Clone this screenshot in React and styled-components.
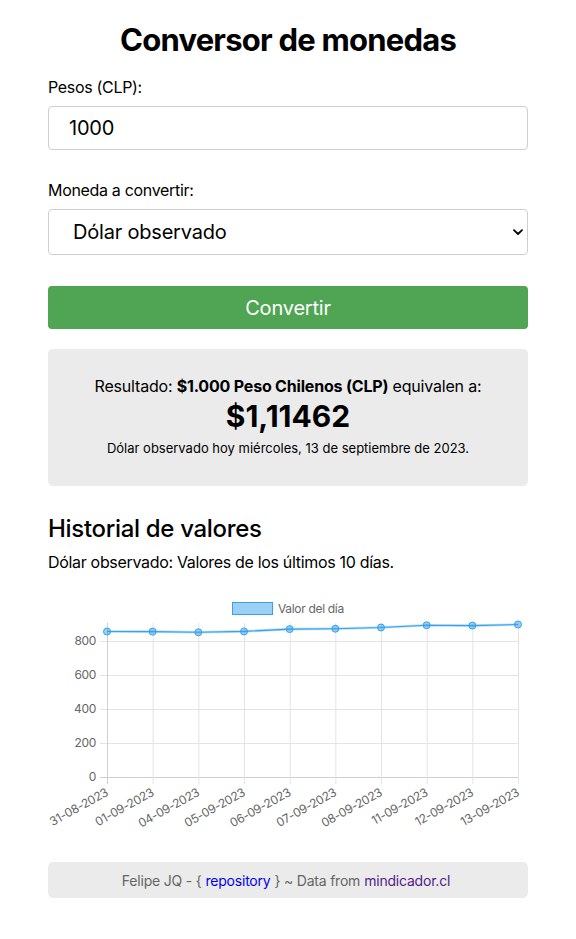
import React from "react";
import styled, { createGlobalStyle } from "styled-components";

const GlobalStyle = createGlobalStyle`
  html, body { margin: 0; padding: 0; background: #fff; }
  body {
    font-family: Inter, "Helvetica Neue", Arial, sans-serif;
    color: #000;
    letter-spacing: -0.02em;
    -webkit-font-smoothing: antialiased;
  }
`;

const Page = styled.main`
  width: 480px;
  margin: 0 auto;
  display: flex;
  flex-direction: column;
`;

const Title = styled.h1`
  margin: 21px 0 0;
  font-size: 31px;
  line-height: 38px;
  font-weight: 700;
  text-align: center;
  letter-spacing: -0.025em;
`;

const Label = styled.label`
  display: block;
  margin-top: ${(p) => p.$top}px;
  font-size: 16px;
  line-height: 19px;
`;

const Input = styled.input`
  box-sizing: border-box;
  margin-top: 9px;
  width: 100%;
  height: 44px;
  padding: 0 20px;
  font: inherit;
  font-size: 20px;
  letter-spacing: -0.01em;
  border: 1px solid #cfcfcf;
  border-radius: 4px;
  outline: none;
`;

const SelectWrap = styled.div`
  position: relative;
  margin-top: 9px;
`;

const Select = styled.select`
  box-sizing: border-box;
  width: 100%;
  height: 46px;
  padding: 0 24px;
  font: inherit;
  font-size: 20px;
  letter-spacing: -0.01em;
  color: #000;
  background: #fff;
  border: 1px solid #cfcfcf;
  border-radius: 4px;
  appearance: none;
  -webkit-appearance: none;
  outline: none;
`;

const Chevron = styled.svg`
  position: absolute;
  right: 5px;
  top: 20px;
  pointer-events: none;
`;

const Button = styled.button`
  margin-top: 31px;
  height: 43px;
  width: 100%;
  border: none;
  border-radius: 4px;
  background: #4fa554;
  color: #fff;
  font: inherit;
  font-size: 20px;
  letter-spacing: -0.01em;
  cursor: pointer;
`;

const ResultBox = styled.section`
  margin-top: 20px;
  height: 137px;
  box-sizing: border-box;
  padding-top: 27px;
  background: #ebebeb;
  border-radius: 5px;
  text-align: center;
`;

const ResultLine = styled.p`
  margin: 0;
  font-size: 16px;
  line-height: 20px;
  letter-spacing: -0.012em;
`;

const Amount = styled.p`
  margin: 2px 0 0;
  font-size: 30px;
  line-height: 36px;
  font-weight: 700;
  letter-spacing: 0;
`;

const DateLine = styled.p`
  margin: 6px 0 0;
  font-size: 13px;
  line-height: 16px;
  letter-spacing: 0;
`;

const Heading = styled.h2`
  margin: 28px 0 0;
  font-size: 24px;
  line-height: 29px;
  font-weight: 500;
`;

const Sub = styled.p`
  margin: 10px 0 0;
  font-size: 16px;
  line-height: 19px;
`;

const ChartSvg = styled.svg`
  display: block;
  margin-top: 16px;
  overflow: visible;
  font-family: Inter, "Helvetica Neue", Arial, sans-serif;
`;

const Footer = styled.footer`
  margin-top: 22px;
  height: 36px;
  display: flex;
  align-items: center;
  justify-content: center;
  background: #ebebeb;
  border-radius: 5px;
  font-size: 14px;
  letter-spacing: -0.015em;
  color: #666;
`;

const Link = styled.a`
  color: ${(p) => (p.$visited ? "#551a8b" : "#0000ee")};
  text-decoration: none;
  margin: 0 4px;
`;

const data = [
  ["31-08-2023", 855.68],
  ["01-09-2023", 855.1],
  ["04-09-2023", 851.4],
  ["05-09-2023", 856.34],
  ["06-09-2023", 869.98],
  ["07-09-2023", 872.17],
  ["08-09-2023", 879.37],
  ["11-09-2023", 892.58],
  ["12-09-2023", 890.6],
  ["13-09-2023", 897.16],
];

const X0 = 107;
const X1 = 518;
const Y0 = 777;
const SCALE = 0.17;
const xAt = (i) => X0 + (i * (X1 - X0)) / (data.length - 1);
const yAt = (v) => Y0 - v * SCALE;

function Chart() {
  const ticks = [0, 200, 400, 600, 800];
  const pts = data.map(([, v], i) => `${xAt(i)},${yAt(v)}`).join(" ");
  return (
    <ChartSvg width="480" height="252" viewBox="48 588 480 252">
      <rect x="232.5" y="602.5" width="40" height="12" fill="rgba(54,162,235,0.5)" stroke="#36a2eb" strokeWidth="1" />
      <text x="278" y="612.5" fontSize="12" fill="#666">Valor del día</text>
      {ticks.map((t) => (
        <g key={t}>
          <line x1="100" x2={X1} y1={yAt(t) + 0.5} y2={yAt(t) + 0.5} stroke={t === 0 ? "#cfcfcf" : "#e4e4e4"} />
          <text x="96" y={yAt(t) + 4} fontSize="12" fill="#666" textAnchor="end">{t}</text>
        </g>
      ))}
      {data.map(([d], i) => (
        <g key={d}>
          <line x1={xAt(i) + 0.5} x2={xAt(i) + 0.5} y1="623" y2="784" stroke={i === 0 ? "#cfcfcf" : "#e4e4e4"} />
          <text
            x={xAt(i) + 2}
            y="795"
            fontSize="12"
            fill="#666"
            textAnchor="end"
            letterSpacing="-0.3"
            transform={`rotate(-29 ${xAt(i) + 2} 795)`}
          >
            {d}
          </text>
        </g>
      ))}
      <polyline points={pts} fill="none" stroke="rgba(54,162,235,0.35)" strokeWidth="2.6" />
      <polyline points={pts} fill="none" stroke="#36a2eb" strokeWidth="1.1" />
      {data.map(([d, v], i) => (
        <circle key={d} cx={xAt(i)} cy={yAt(v)} r="3.5" fill="rgba(54,162,235,0.5)" stroke="#36a2eb" strokeWidth="1" />
      ))}
    </ChartSvg>
  );
}

export default function App() {
  return (
    <>
      <GlobalStyle />
      <Page>
        <Title>Conversor de monedas</Title>
        <Label $top={19} htmlFor="pesos">Pesos (CLP):</Label>
        <Input id="pesos" type="text" defaultValue="1000" />
        <Label $top={31} htmlFor="moneda">Moneda a convertir:</Label>
        <SelectWrap>
          <Select id="moneda" defaultValue="dolar">
            <option value="dolar">Dólar observado</option>
            <option value="euro">Euro</option>
            <option value="uf">Unidad de fomento</option>
          </Select>
          <Chevron width="10" height="7" viewBox="0 0 10 7">
            <path d="M1 1.2 L5 5 L9 1.2" fill="none" stroke="#000" strokeWidth="1.8" strokeLinecap="round" strokeLinejoin="round" />
          </Chevron>
        </SelectWrap>
        <Button type="button">Convertir</Button>
        <ResultBox>
          <ResultLine>
            Resultado: <strong>$1.000 Peso Chilenos (CLP)</strong> equivalen a:
          </ResultLine>
          <Amount>$1,11462</Amount>
          <DateLine>Dólar observado hoy miércoles, 13 de septiembre de 2023.</DateLine>
        </ResultBox>
        <Heading>Historial de valores</Heading>
        <Sub>Dólar observado: Valores de los últimos 10 días.</Sub>
        <Chart />
        <Footer>
          Felipe JQ - {"{"}
          <Link href="#">repository</Link>
          {"}"} ~ Data from
          <Link $visited href="#">mindicador.cl</Link>
        </Footer>
      </Page>
    </>
  );
}
